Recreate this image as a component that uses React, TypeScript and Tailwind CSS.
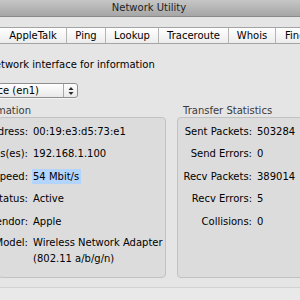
import React from "react";

const Row = ({ label, value, lw, className = "" }: { label: string; value: React.ReactNode; lw: string; className?: string }) => (
  <div className={`flex h-[16px] leading-[16px] whitespace-nowrap ${className}`}>
    <div className={`flex justify-end ${lw}`}>{label}</div>
    <div className="ml-[5px]">{value}</div>
  </div>
);

export default function App() {
  return (
    <div className="w-[300px] h-[300px] overflow-hidden bg-[#e5e5e5] text-[10px] text-black font-['DejaVu_Sans',sans-serif] flex flex-col">
      {/* Title bar */}
      <div className="h-[17px] shrink-0 bg-gradient-to-b from-[#c6c6c6] to-[#a6a6a6] border-b border-[#8a8a8a] flex items-center justify-center leading-[16px] text-[#1e1e1e]">
        <span className="ml-[-2px]">Network Utility</span>
      </div>
      <div className="h-[10px] shrink-0" />
      {/* Tabs */}
      <div className="h-[17px] shrink-0 flex border-y border-[#a4a4a4] bg-gradient-to-b from-[#ffffff] to-[#ececec] leading-[15px] whitespace-nowrap">
        <div className="w-[67px] shrink-0 border-r border-[#b4b4b4] flex justify-center">AppleTalk</div>
        <div className="w-[39px] shrink-0 border-r border-[#b4b4b4] flex justify-center">Ping</div>
        <div className="w-[53px] shrink-0 border-r border-[#b4b4b4] flex justify-center">Lookup</div>
        <div className="w-[70px] shrink-0 border-r border-[#b4b4b4] flex justify-center">Traceroute</div>
        <div className="w-[47px] shrink-0 border-r border-[#b4b4b4] flex justify-center">Whois</div>
        <div className="w-[60px] shrink-0 pl-[9px]">Finger</div>
      </div>
      {/* Instruction */}
      <div className="mt-[13px] h-[16px] leading-[16px] flex whitespace-nowrap shrink-0">
        <div className="w-[1px] flex justify-end">Please select a ne</div>
        <div>twork interface for information</div>
      </div>
      {/* Popup */}
      <div className="mt-[10px] h-[15px] w-[80px] ml-[-2px] shrink-0 flex border border-[#8e8e8e] rounded-[3px] bg-gradient-to-b from-[#ffffff] to-[#e9e9e9] shadow-[0_1px_0_rgba(255,255,255,0.6)]">
        <div className="w-[64px] flex leading-[13px] whitespace-nowrap">
          <div className="w-[40px] flex justify-end">Wireless Interface (en1)</div>
        </div>
        <div className="flex-1 border-l border-[#a8a8a8] flex items-center justify-center">
          <svg width="6" height="10" viewBox="0 0 6 10">
            <path d="M3 1 L5.5 4 L0.5 4 Z" fill="#2a2a2a" />
            <path d="M3 9 L5.5 6 L0.5 6 Z" fill="#2a2a2a" />
          </svg>
        </div>
      </div>
      {/* Group labels */}
      <div className="mt-[7px] h-[12px] leading-[12px] flex whitespace-nowrap text-[#3a3a3a] shrink-0">
        <div className="w-[31px] flex justify-end">Interface Information</div>
        <div className="ml-[152px]">Transfer Statistics</div>
      </div>
      {/* Boxes */}
      <div className="h-[161px] shrink-0 flex">
        <div className="ml-[-2px] w-[168px] shrink-0 border border-[#c2c2c2] rounded-[4px] bg-[#dcdcdc] pt-[6px] flex flex-col">
          <Row lw="w-[29px]" label="Hardware Address:" value="00:19:e3:d5:73:e1" />
          <Row lw="w-[29px]" label="IP Address(es):" value="192.168.1.100" className="mt-[6px]" />
          <Row
            lw="w-[29px]"
            label="Link Speed:"
            value={<span className="inline-block h-[15px] leading-[15px] bg-[#b3d4fc] ml-[-1px] pl-[1px] pr-[2px]">54 Mbit/s</span>}
            className="mt-[7px]"
          />
          <Row lw="w-[29px]" label="Link Status:" value="Active" className="mt-[6px]" />
          <Row lw="w-[29px]" label="Vendor:" value="Apple" className="mt-[7px]" />
          <Row lw="w-[29px]" label="Model:" value="Wireless Network Adapter" className="mt-[5px]" />
          <div className="h-[16px] leading-[16px] pl-[34px] whitespace-nowrap">(802.11 a/b/g/n)</div>
        </div>
        <div className="ml-[11px] w-[140px] shrink-0 border border-[#c2c2c2] rounded-[4px] bg-[#dcdcdc] pt-[6px] flex flex-col">
          <Row lw="w-[74px]" label="Sent Packets:" value="503284" />
          <Row lw="w-[74px]" label="Send Errors:" value="0" className="mt-[6px]" />
          <Row lw="w-[74px]" label="Recv Packets:" value="389014" className="mt-[7px]" />
          <Row lw="w-[74px]" label="Recv Errors:" value="5" className="mt-[6px]" />
          <Row lw="w-[74px]" label="Collisions:" value="0" className="mt-[7px]" />
        </div>
      </div>
      <div className="h-[9px] shrink-0" />
      <div className="flex-1 border-t border-[#d2d2d2] bg-[#e9e9e9]" />
    </div>
  );
}
